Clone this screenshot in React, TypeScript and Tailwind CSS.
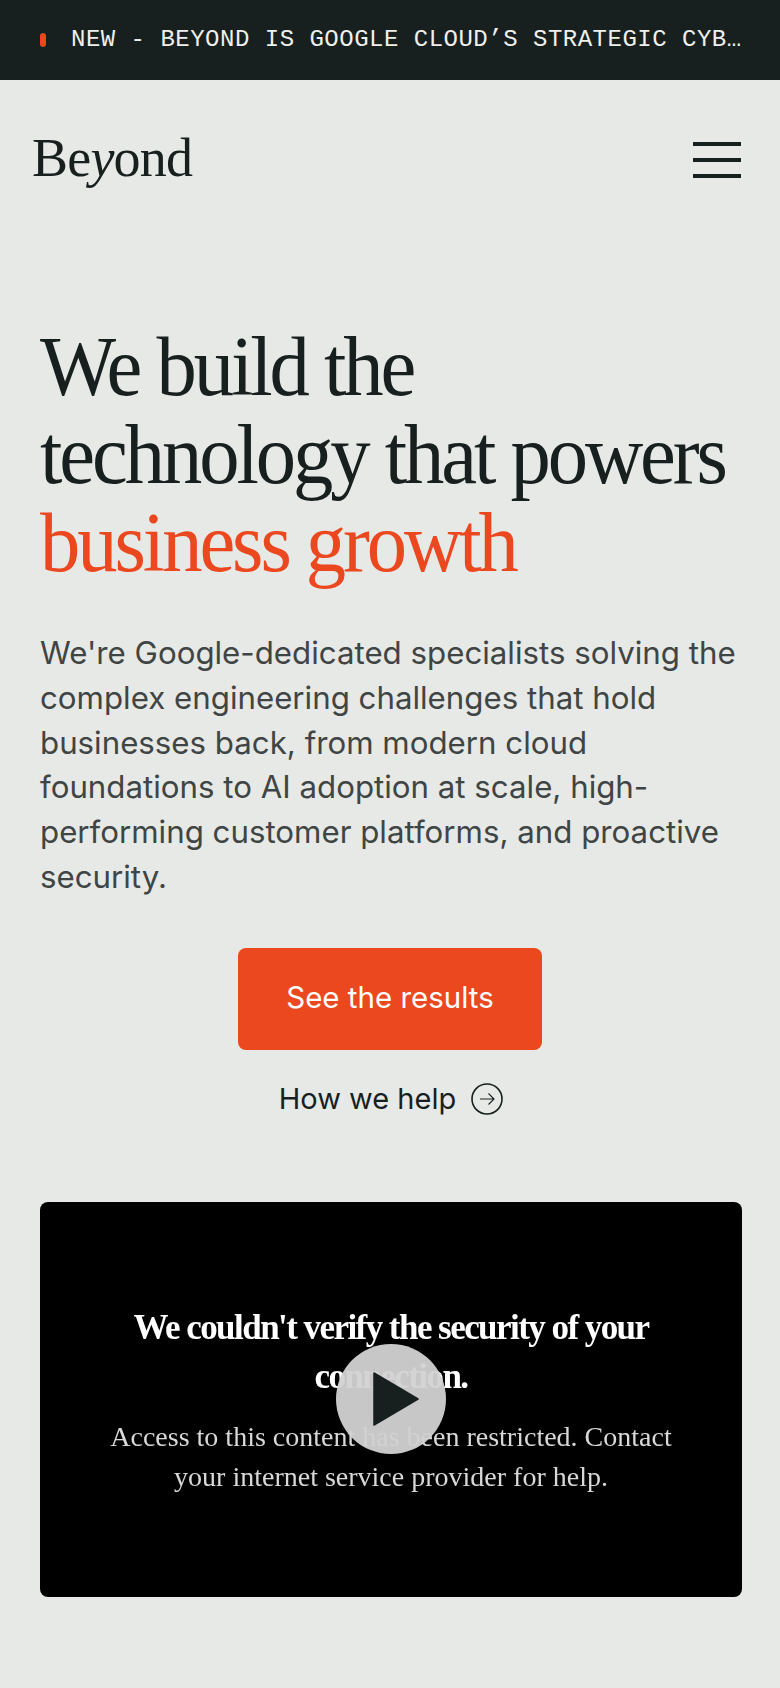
import React from "react";

const sans = "font-['Inter','Noto_Sans',sans-serif]";
const serif = "font-['Liberation_Serif',serif]";

const TopBanner: React.FC = () => (
  <div className="flex h-[80px] items-center gap-[25px] bg-[#181f1f] pl-[40px] pr-[37px]">
    <span className="h-[14px] w-[6px] shrink-0 rounded-full bg-[#eb4820]" />
    <p className="truncate font-['Liberation_Mono',monospace] text-[24px] leading-[30px] tracking-[0.5px] text-[#eef0ed]">
      NEW - BEYOND IS GOOGLE CLOUD’S STRATEGIC CYBERSECURITY PARTNER
    </p>
  </div>
);

const NavBar: React.FC = () => (
  <div className="mt-[50px] flex h-[60px] items-center justify-between pl-[32px] pr-[39px]">
    <span className={`${serif} pb-[4px] text-[54px] leading-[52px] tracking-[-0.8px] text-[#181f1f]`}>
      Be<em>y</em>ond
    </span>
    <button className="flex h-[36px] w-[48px] flex-col justify-between">
      <span className="h-[4px] w-full bg-[#181f1f]" />
      <span className="h-[4px] w-full bg-[#181f1f]" />
      <span className="h-[4px] w-full bg-[#181f1f]" />
    </button>
  </div>
);

const Hero: React.FC = () => (
  <div className="px-[40px] pt-[133px]">
    {/* the serif runs wide at this size, so it gets squeezed a little */}
    <h1 className={`${serif} origin-left scale-x-[0.96] whitespace-nowrap text-[84px] leading-[88px] tracking-[-3.2px] text-[#181f1f]`}>
      We build the
      <br />
      technology that powers
      <br />
      <span className="text-[#eb4820]">business growth</span>
    </h1>
    <p className={`${sans} mt-[44px] text-[31.25px] leading-[44.8px] text-[#3f4544]`}>
      We're Google-dedicated specialists solving the complex engineering challenges that hold businesses back, from modern cloud foundations to AI adoption at scale, high-performing customer platforms, and proactive security.
    </p>
    <div className="mt-[48px] flex flex-col items-center">
      <button className={`${sans} h-[102px] w-[304px] rounded-[8px] bg-[#eb4820] pb-[3px] text-[29.5px] text-white`}>
        See the results
      </button>
      <a className={`${sans} mt-[31px] flex items-center gap-[15px] pl-[2px] text-[29px] leading-[36px] text-[#181f1f]`}>
        How we help
        <svg width="32" height="32" viewBox="0 0 32 32" fill="none" stroke="#181f1f">
          <circle cx="16" cy="16" r="15" strokeWidth="1.6" />
          <path d="M9 16h14M17.5 10.5 23 16l-5.5 5.5" strokeWidth="1.1" />
        </svg>
      </a>
    </div>
  </div>
);

const VideoCard: React.FC = () => (
  <div className="px-[40px] pt-[85px]">
    <div className="relative flex h-[395px] w-[702px] flex-col items-center overflow-hidden rounded-[8px] bg-black pt-[101px] text-center">
      <div className={`${serif} blur-[0.7px]`}>
        <h2 className="mx-auto w-[560px] text-[35px] font-bold leading-[49px] tracking-[-1.55px] text-white">
          We couldn't verify the security of your connection.
        </h2>
        <p className="mx-auto mt-[16px] w-[600px] text-[28px] leading-[40px] text-[#d8d8d8]">
          Access to this content has been restricted. Contact your internet service provider for help.
        </p>
      </div>
      <button className="absolute left-[296px] top-[142px] flex h-[110px] w-[110px] items-center justify-center rounded-full bg-[#d2d2d2]/95">
        <svg width="46" height="54" viewBox="0 0 46 54" className="ml-[10px]">
          <path d="M1 1 45 27 1 53Z" fill="#181f1f" stroke="#181f1f" strokeWidth="1.5" strokeLinejoin="round" />
        </svg>
      </button>
    </div>
  </div>
);

export default function App() {
  return (
    <div className="h-[1688px] w-[780px] overflow-hidden bg-[#e7e9e6]">
      <TopBanner />
      <NavBar />
      <Hero />
      <VideoCard />
    </div>
  );
}
